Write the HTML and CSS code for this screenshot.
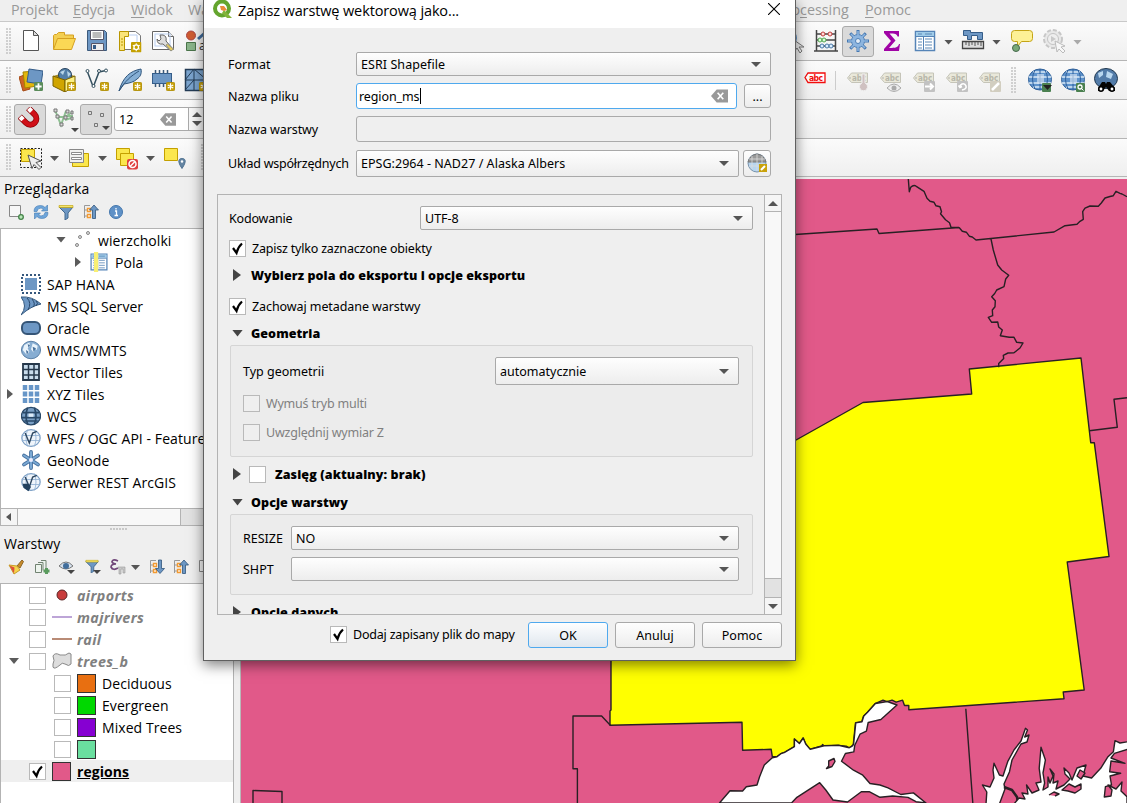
FILE: index.html
```html
<!DOCTYPE html>
<html lang="pl">
<head>
<meta charset="utf-8">
<title>Zapisz warstwę wektorową jako...</title>
<link rel="stylesheet" href="styles.css">
</head>
<body>
<svg class="sprite" aria-hidden="true">
<defs>
<symbol id="star" viewBox="0 0 10 10"><rect x=".5" y=".5" width="9" height="9" rx="1" fill="#c9a20c" stroke="#b08d00"/><path d="M5 1.5v7M2 3.2l6 3.6M8 3.2L2 6.8" stroke="#fff" stroke-width="1.3"/></symbol>
<symbol id="gearstar" viewBox="0 0 10 10"><rect width="10" height="10" rx="1" fill="#c4a000"/><circle cx="5" cy="5" r="2.2" fill="none" stroke="#fff" stroke-width="1.3"/><path d="M5 1.2v1.5M5 7.3v1.5M1.7 3l1.3.8M7 6.2l1.3.8M8.3 3L7 3.8M3 6.2L1.7 7" stroke="#fff"/></symbol>
<symbol id="plus" viewBox="0 0 10 10"><rect width="10" height="10" rx="1.5" fill="#5a8c5a"/><path d="M5 1.5v7M1.5 5h7" stroke="#fff" stroke-width="2"/></symbol>
<symbol id="new" viewBox="0 0 24 24"><path d="M4.5 1.5h10l5 5v15h-15z" fill="#fff" stroke="#555"/><path d="M14.500 1.500v5h5z" fill="#ddd" stroke="#555"/></symbol>
<symbol id="open" viewBox="0 0 24 24"><path d="M1.500 20V6.500l1-1h2l2-2h6v2.500h9v4" fill="#f3cf52" stroke="#d5a021"/><path d="M1.500 20.500l4-11h18l-4 11z" fill="#fbd855" stroke="#d5a021"/></symbol>
<symbol id="save" viewBox="0 0 24 24"><path d="M2.500 1.500h17l2 2v18h-19v-20z" fill="#6d97c4" stroke="#3c5a7c"/><path d="M5.500 1.500h13v9h-13z" fill="#fff" stroke="#556"/><path d="M7.500 4h9M7.500 6h9M7.500 8h9" stroke="#777"/><path d="M6.500 14.500h12v7h-12z" fill="#eee" stroke="#556"/><path d="M8 16h3v4h-3z" fill="#345b87"/></symbol>
<symbol id="layout" viewBox="0 0 24 24"><path d="M3.500 2.500h14l5 4v14h-19z" fill="#fff" stroke="#777"/><path d="M6 6h13v12" fill="none" stroke="#b8cdf0"/><path d="M1.500 2.500h9v5h-4v14h-5z" fill="#fae47a" stroke="#b99600"/><path d="M3 10h2M3 13h2M3 16h2" stroke="#b99600"/><use href="#gearstar" x="13" y="13" width="10.500" height="10.500"/></symbol>
<symbol id="wrench" viewBox="0 0 24 24"><path d="M1.500 2.500h16l5 5v13h-21z" fill="#fff" stroke="#666"/><path d="M17.500 2.500v5h5" fill="#eee" stroke="#666"/><rect x="4" y="5" width="15" height="12" fill="none" stroke="#b8cdf0"/><path d="M9 6l1 4-2 2-2-2q0 6 6 5l8 7 2-2-7-8q1-5-3-6z" fill="#ddd" stroke="#666"/><path d="M15 16l5 6 2.500-2-6-5z" fill="#e9cc58" stroke="#998"/></symbol>
<symbol id="style" viewBox="0 0 24 24"><circle cx="7" cy="6.500" r="4.500" fill="#cf5c31" stroke="#a44"/><path d="M2.500 13.500h9v8h-9z" fill="#8ab58a" stroke="#4a744a"/><path d="M14 10l9-8" stroke="#406c9c" stroke-width="3"/><text x="15" y="21" font-family="Noto Sans" font-size="12" fill="#333">a</text></symbol>
<symbol id="datasource" viewBox="0 0 24 24"><path d="M0 9l8-3 3 15-7 2z" fill="#cf6424" stroke="#a54b16"/><path d="M4 4l13-1 1 15-12 2z" fill="#e2b70c" stroke="#a88400"/><path d="M10 1l14 2-2 13-14-2z" fill="#6d97c4" stroke="#355d89"/><use href="#plus" x="15" y="14" width="9" height="9"/></symbol>
<symbol id="geopkg" viewBox="0 0 24 24"><path d="M1 8l11-3 11 3-10 4z" fill="#a58a20"/><circle cx="13" cy="7" r="6.500" fill="#527fa8" stroke="#29435e"/><path d="M8 4l5-2-2 5zM15 3l4 3-3 3z" fill="#b9d6e9"/><path d="M1 8l12 4v12L1 18z" fill="#d0a500" stroke="#7b6200"/><path d="M13 12l10-4v10l-10 6z" fill="#fbf084" stroke="#7b6200"/><use href="#star" x="15" y="14" width="9" height="9"/></symbol>
<symbol id="vec" viewBox="0 0 24 24"><path d="M2.500 4l5 13 1.500 0 5-13 7-1.500" fill="none" stroke="#34505f" stroke-width="1.500"/><g fill="#fff" stroke="#34505f"><circle cx="2.500" cy="3" r="1.500"/><circle cx="14" cy="3" r="1.500"/><circle cx="21" cy="2.500" r="1.500"/><circle cx="8.500" cy="18" r="1.500"/></g><use href="#star" x="15" y="14" width="9" height="9"/></symbol>
<symbol id="feather" viewBox="0 0 24 24"><path d="M1 23C5 9 12 3 23 1c1 5-1 8-4 10-3 3-7 4-13 5z" fill="#86afd5" stroke="#31567c"/><path d="M1 23C7 13 13 8 21 3" fill="none" stroke="#31567c"/><use href="#star" x="15" y="14" width="9" height="9"/></symbol>
<symbol id="chip" viewBox="0 0 24 24"><path d="M4.500 2v17M8.500 2v17M12.500 2v17M16.500 2v17" stroke="#3a5878" stroke-width="1.500"/><rect x="1.500" y="5.500" width="19" height="10" fill="#6d97c4" stroke="#355d89"/><use href="#star" x="15" y="14" width="9" height="9"/></symbol>
<symbol id="mesh" viewBox="0 0 24 24"><path d="M1.500 1.500h22v21h-22z" fill="#7ba4ce" stroke="#243c56" stroke-width="1.500"/><path d="M1 12h22M10 1v22M1 12L10 1l13 11M1 22l9-10" stroke="#243c56" fill="none"/><use href="#star" x="15" y="14" width="9" height="9"/></symbol>
<symbol id="magnet" viewBox="0 0 24 24"><g transform="rotate(-45 12 12)" fill="none"><path d="M6.500 3v9a6 6 0 0 0 12 0V3" stroke="#8d0005" stroke-width="6"/><path d="M6.500 4v8a6 6 0 0 0 12 0V4" stroke="#d01018" stroke-width="4.500"/><path d="M6.500 3.600v4M18.500 3.600v4" stroke="#fff" stroke-width="4.500"/></g></symbol>
<symbol id="vertexall" viewBox="0 0 24 24"><path d="M3 3l6 15L14 4M7 10h6l6-4M13 13l6-2M13 9h8" fill="none" stroke="#8fc193" stroke-width="2"/><path d="M2 2h3v3H2zM4 8h3v3H4zM8 16h3v3H8zM12 9h3v3h-3zM14 3h3v3h-3zM19 4h2v3h-2zM19 10h2v3h-2z" fill="#d9d9d9" stroke="#777"/></symbol>
<symbol id="vertexpts" viewBox="0 0 24 24"><path d="M4.500 4.500h3v3h-3zM16.500 6.500h3v3h-3zM10.500 16.500h3v3h-3z" fill="#ddd" stroke="#777"/></symbol>
<symbol id="select" viewBox="0 0 24 24"><path d="M1.500 2.500h21v19h-21z" fill="none" stroke="#222" stroke-dasharray="2 1.500"/><path d="M2.500 3.500h13v12h-13z" fill="#fbe74d" stroke="#c4a000"/><path d="M9 9l13 6-5 1.500 5 5-2 2-5-5-2 4z" fill="#eee" stroke="#555"/></symbol>
<symbol id="selform" viewBox="0 0 24 24"><path d="M5.500 7.500h16v13h-16z" fill="#fbe74d" stroke="#c4a000"/><path d="M2.500 3.500h14v13h-14z" fill="#f0f0ef" stroke="#888"/><path d="M4.500 6.500h10v2h-10zM4.500 11.500h10v2h-10z" fill="#fff" stroke="#8b8b8b"/></symbol>
<symbol id="deselect" viewBox="0 0 24 24"><path d="M1.500 2.500h13v11h-13z" fill="#fbe74d" stroke="#c4a000"/><path d="M5.500 7.500h13v12h-13z" fill="#fbe74d" stroke="#c4a000"/><rect x="12" y="13" width="11" height="10.500" rx="2" fill="#df3f3f"/><circle cx="17.500" cy="18" r="3.500" fill="none" stroke="#fff" stroke-width="1.500"/><path d="M15 20.500l5-5" stroke="#fff" stroke-width="1.500"/></symbol>
<symbol id="selloc" viewBox="0 0 24 24"><path d="M1.500 2.500h13v12h-13z" fill="#fbe74d" stroke="#c4a000"/><path d="M19 22.500c-6-9-2-10 0-10s6 1 0 10z" fill="#6686a3" stroke="#4e7191"/><circle cx="19" cy="15.500" r="1.200" fill="#fff"/></symbol>
<symbol id="identify" viewBox="0 0 24 24"><circle cx="8" cy="9" r="8" fill="#5d91c4"/><path d="M10 9l13 9-5 0 3 4-2 2-3-5-3 4z" fill="#eee" stroke="#777"/></symbol>
<symbol id="abacus" viewBox="0 0 24 24"><path d="M2.500 1v21M21.500 1v21M0 22h24M2 5h20M2 11h20M2 17h20" stroke="#454545" stroke-width="1.500"/><g fill="#ffd7d7" stroke="#c13d3d"><circle cx="9" cy="5" r="2"/><circle cx="16" cy="5" r="2"/></g><g fill="#d8ffd5" stroke="#54a554"><circle cx="6" cy="11" r="2"/><circle cx="10" cy="11" r="2"/></g><g fill="#d8edff" stroke="#4a79a6"><circle cx="8" cy="17" r="2"/><circle cx="13" cy="17" r="2"/><circle cx="17" cy="17" r="2"/></g></symbol>
<symbol id="gear" viewBox="0 0 24 24"><path d="M12 1v22M1 12h22M4.200 4.200l15.600 15.600M19.800 4.200L4.200 19.800" stroke="#4478b2" stroke-width="3"/><circle cx="12" cy="12" r="6.500" fill="#8db5df" stroke="#4d80b8"/><path d="M12 2v20M2 12h20M5 5l14 14M19 5L5 19" stroke="#8db5df" stroke-width="1.600"/><circle cx="12" cy="12" r="2.500" fill="#e4edf7" stroke="#4d80b8"/></symbol>
<symbol id="sigma" viewBox="0 0 24 24"><path d="M4 2h15v5.500h-1.500C17 5 15 4.500 9.500 4.500l6 7L9 19c7 0 9-.5 10-4h1l-1 7H4v-2l7-8-7-8z" fill="#a003a5"/></symbol>
<symbol id="table" viewBox="0 0 24 24"><path d="M2.500 2.500h19v19h-19z" fill="#fff" stroke="#5584b7" stroke-width="1.500"/><path d="M3 3h18v4H3z" fill="#9fcbe8"/><path d="M3 7.500h18M10.500 7v14" stroke="#5584b7"/><path d="M5 10h4M12 10h7M5 13h4M12 13h7M5 16h4M12 16h7M5 19h4M12 19h7M5 5h4M12 5h7" stroke="#5c89b7"/></symbol>
<symbol id="measure" viewBox="0 0 24 24"><path d="M2.500 1.500h7v2h12v7h-5v-4h-6v4h-4v-4h-4z" fill="#6d97c4" stroke="#355d89"/><path d="M1.500 12.500h21v7h-21z" fill="#ddd" stroke="#444" stroke-width="1.300"/><path d="M5 13v3M8 13v4M11 13v3M14 13v4M17 13v3M20 13v4" stroke="#555"/></symbol>
<symbol id="tip" viewBox="0 0 24 24"><path d="M5.500 1.500h15q3 0 3 3v5q0 3-3 3h-8l-4 5 0-5h-3q-3 0-3-3v-5q0-3 3-3z" fill="#fdf196" stroke="#c4a416"/><circle cx="7" cy="19" r="3.500" fill="#78a878" stroke="#45684b"/></symbol>
<symbol id="action" viewBox="0 0 24 24"><circle cx="11" cy="10" r="9" fill="#e8e8e8" stroke="#c7c7c7" stroke-width="2" stroke-dasharray="4 2"/><circle cx="11" cy="10" r="5.500" fill="#eee" stroke="#c4c4c4"/><path d="M9 7l5 3-5 3z" fill="#c9c9c9"/><path d="M13 12l10 5-4 1 4 4-2 2-4-4-2 3z" fill="#f7f7f7" stroke="#bbb"/></symbol>
<symbol id="label" viewBox="0 0 24 24"><path d="M2.500 10l4-5h16v9.500h-16z" fill="#e9e8da" stroke="#c5c4b8"/><circle cx="5" cy="10" r=".8" fill="#aaa"/><text x="7" y="12.500" font-family="DejaVu Sans Condensed" font-weight="bold" font-size="8" fill="#b7b6a9">abc</text></symbol>
<symbol id="globe" viewBox="0 0 24 24"><ellipse cx="12" cy="11.500" rx="11.500" ry="10.500" fill="#5f93cc" stroke="#2f5f98"/><path d="M5 4h14M1 9h22M1 15h22M5 19h14" stroke="#dcebf8" stroke-width="1.500"/><path d="M12 1v21M7 2q-5 9 0 19M17 2q5 9 0 19" fill="none" stroke="#2d5f9c"/><path d="M9 6h7v10H9z" fill="#d5e4f2" opacity=".65"/></symbol>
<symbol id="world" viewBox="0 0 24 24"><ellipse cx="12" cy="12" rx="11.500" ry="10.500" fill="#87add2" stroke="#49719a"/><path d="M4 6l6-3 1 4-3 3 2 4-3 4-5-6zM14 4l6 3-1 5-3-2-1 5-3-4z" fill="#e9f3fb"/><path d="M8 5l3 1-2 3zM14 8l4 2-3 4zM6 12l3 2-2 4z" fill="#48719c"/></symbol>
<symbol id="wfs" viewBox="0 0 24 24"><ellipse cx="12" cy="12" rx="11" ry="10" fill="#eff5fb" stroke="#799dc4" stroke-width="1.500"/><path d="M1 9h22M1 15h22M8 2q-4 10 0 20M16 2q4 10 0 20" fill="none" stroke="#91b1d2"/><path d="M5 6l5 12 4-12 5-2" fill="none" stroke="#2e4760" stroke-width="1.700"/></symbol>
<symbol id="wcs" viewBox="0 0 24 24"><ellipse cx="12" cy="12" rx="11.500" ry="10.500" fill="#799fc5" stroke="#294969" stroke-width="1.500"/><path d="M2 8h20M1 14h22M4 18h16M8 2q-4 10 0 20M16 2q4 10 0 20" fill="none" stroke="#294969" stroke-width="2"/><path d="M9 9h6v4H9z" fill="#dcebf8"/></symbol>
<symbol id="refresh" viewBox="0 0 16 16"><path d="M1 7.500Q1 1.500 7.500 1.500q3 0 4.500 2L14.500 1v6H8.500l2-2Q8 3.500 6 4.500 4.500 5.500 4 7.500zM15 8.500q0 6-6.500 6-3 0-4.500-2L1.500 15V9h6l-2 2q2.500 1.500 4.500.5 1.500-1 2-3z" fill="#6ea5da" stroke="#3f78b2" stroke-width=".6"/></symbol>
<symbol id="filter" viewBox="0 0 16 16"><path d="M1 3h14l-5 6v5l-3 2V9z" fill="#6d97c4" stroke="#41688f"/><path d="M1 1.500h14v2H1z" fill="#f5e46c" stroke="#bda000" stroke-width=".6"/></symbol>
<symbol id="collapse" viewBox="0 0 16 16"><path d="M7 1.500H1.500V14M1.500 6H5M1.500 12H5" fill="none" stroke="#999"/><path d="M4.500 4.500h3v3h-3zM4.500 10.500h3v3h-3z" fill="#fff" stroke="#f29a32" stroke-width="1.400"/><path d="M11 1l4.500 5h-3v8.500h-3V6h-3z" fill="#6d97c4" stroke="#31567c" stroke-width=".8"/></symbol>
<symbol id="expand" viewBox="0 0 16 16"><path d="M7 1.500H1.500V14M1.500 6H5M1.500 12H5" fill="none" stroke="#999"/><path d="M4.500 4.500h3v3h-3zM4.500 10.500h3v3h-3z" fill="#fff" stroke="#f29a32" stroke-width="1.400"/><path d="M11 14.500l-4.500-5h3V1h3v8.500h3z" fill="#6d97c4" stroke="#31567c" stroke-width=".8"/></symbol>
<symbol id="info" viewBox="0 0 16 16"><circle cx="8" cy="8" r="6.500" fill="#5f91c7" stroke="#4477ad"/><path d="M8 4v1.500M7 7h1.500v4.500M6.500 11.500h3.500" stroke="#fff" stroke-width="1.300" fill="none"/></symbol>
<symbol id="addsel" viewBox="0 0 16 16"><path d="M1.500 1.500h11v11h-11z" fill="#f7f7f7" stroke="#888"/><circle cx="13" cy="13" r="2.300" fill="#b7e6b7" stroke="#408145" stroke-width="1.300"/></symbol>
</defs>
</svg>

<div class="app">
  <nav class="menubar"><span class="m1">Projekt</span><span class="m2"><u>E</u>dycja</span><span class="m3"><u>W</u>idok</span><span class="m4">Wa</span><span class="m5">Pro<u>c</u>essing</span><span class="m6"><u>P</u>omoc</span></nav>

  <div class="toolbar">
    <i class="grip"></i>
    <span class="tool"><svg><use href="#new"/></svg></span><span class="tool"><svg><use href="#open"/></svg></span><span class="tool"><svg><use href="#save"/></svg></span><span class="tool"><svg><use href="#layout"/></svg></span><span class="tool"><svg><use href="#wrench"/></svg></span><span class="tool"><svg><use href="#style"/></svg></span>
    <div class="right r1">
      <span class="tool"><svg><use href="#identify"/></svg></span><span class="tool"><svg><use href="#abacus"/></svg></span><span class="tool on"><svg><use href="#gear"/></svg></span><span class="tool"><svg><use href="#sigma"/></svg></span><span class="tool"><svg><use href="#table"/></svg></span><i class="drop"></i><span class="tool"><svg><use href="#measure"/></svg></span><i class="drop"></i><span class="tool"><svg><use href="#tip"/></svg></span><span class="tool"><svg><use href="#action"/></svg></span><i class="drop dim"></i>
    </div>
  </div>

  <div class="toolbar">
    <i class="grip"></i>
    <span class="tool"><svg><use href="#datasource"/></svg></span><span class="tool"><svg><use href="#geopkg"/></svg></span><span class="tool"><svg><use href="#vec"/></svg></span><span class="tool"><svg><use href="#feather"/></svg></span><span class="tool"><svg><use href="#chip"/></svg></span><span class="tool"><svg><use href="#mesh"/></svg></span>
    <div class="right r2">
      <span class="tool"><svg viewBox="0 0 24 24"><path d="M2 9.500l3-4.500h17v9.500H5z" fill="#fff" stroke="#f20d0d" stroke-width="1.300"/><text x="6" y="12.500" font-family="DejaVu Sans Condensed" font-weight="bold" font-size="8.500" textLength="14" fill="#f20d0d">abc</text></svg></span><i class="vsep"></i>
      <span class="tool"><svg viewBox="0 0 24 24"><use href="#label"/><path d="M17 6v9a4 4 0 1 0 3 0V6z" fill="#cfc1c1" stroke="#eee"/></svg></span>
      <span class="tool"><svg viewBox="0 0 24 24"><use href="#label"/><path d="M9 20q7-8 14 0-7 7-14 0z" fill="#eee" stroke="#aaa"/><circle cx="16" cy="20" r="2.500" fill="#aaa"/></svg></span>
      <span class="tool"><svg viewBox="0 0 24 24"><use href="#label"/><rect x="13" y="13" width="11" height="11" rx="1" fill="#c2c2c2"/><path d="M14 18.500h8M19 15.500l3 3-3 3" stroke="#fff" stroke-width="2" fill="none"/></svg></span>
      <span class="tool"><svg viewBox="0 0 24 24"><use href="#label"/><rect x="13" y="13" width="11" height="11" rx="1" fill="#c2c2c2"/><path d="M18 22q5-1 4-4-1-3-4-2-2 1-2 3M14.500 17.500l1.500 2 2-1" stroke="#fff" stroke-width="1.600" fill="none"/></svg></span>
      <span class="tool"><svg viewBox="0 0 24 24"><use href="#label"/><rect x="13" y="13" width="11" height="11" rx="1" fill="#d2cec0"/><path d="M15 22l7-7" stroke="#fff" stroke-width="2.500"/></svg></span>
      <i class="grip mid"></i>
      <span class="tool"><svg viewBox="0 0 24 24"><use href="#globe"/><rect x="14" y="15" width="9" height="9" rx="1" fill="#4a8050"/><path d="M15 17h9l-4.500 5z" fill="#222"/></svg></span>
      <span class="tool"><svg viewBox="0 0 24 24"><use href="#globe"/><rect x="15" y="15" width="9" height="9" rx="1" fill="#4a8050"/><circle cx="19" cy="19" r="2" fill="none" stroke="#fff" stroke-width="1.300"/><path d="M20.500 20.500l2 2" stroke="#fff"/></svg></span>
      <span class="tool"><svg viewBox="0 0 24 24"><ellipse cx="12" cy="10.500" rx="11.500" ry="10" fill="#527ba8" stroke="#20384f"/><path d="M4 5l5-2v4l-4 3zM13 3l6 3-2 5-5-2z" fill="#b9d7ef"/><path d="M8 14h3l1 2 1-2h3l5 6v3h-6l-3-4-3 4H4v-3z" fill="#050505"/><circle cx="7" cy="21" r="2.200" fill="#fff" stroke="#000" stroke-width="1.500"/><circle cx="18" cy="21" r="2.200" fill="#fff" stroke="#000" stroke-width="1.500"/></svg></span>
    </div>
  </div>

  <div class="toolbar">
    <i class="grip"></i>
    <span class="tool on"><svg><use href="#magnet"/></svg></span>
    <span class="tool narrow"><svg><use href="#vertexall"/></svg><i class="sub"></i></span>
    <span class="tool on"><svg><use href="#vertexpts"/></svg><i class="sub"></i></span>
    <div class="spin"><span>12</span><svg class="clear" viewBox="0 0 18 14"><path d="M0 7l6-7h12v14H6z" fill="#999"/><path d="M7 3.500l6 7M13 3.500l-6 7" stroke="#fff" stroke-width="1.700"/></svg><div class="steps"><i class="up"></i><i class="dn"></i></div></div>
  </div>

  <div class="toolbar last">
    <i class="grip"></i>
    <span class="tool"><svg><use href="#select"/></svg></span><i class="drop"></i><span class="tool"><svg><use href="#selform"/></svg></span><i class="drop"></i><span class="tool"><svg><use href="#deselect"/></svg></span><i class="drop"></i><span class="tool"><svg><use href="#selloc"/></svg></span><i class="grip end"></i>
  </div>

  <main class="work">
    <aside class="docks">
      <h2 class="docktitle">Przeglądarka</h2>
      <div class="dockbar b1"><svg><use href="#addsel"/></svg><svg><use href="#refresh"/></svg><svg><use href="#filter"/></svg><svg><use href="#collapse"/></svg><svg><use href="#info"/></svg></div>
      <div class="tree browser">
        <div class="row n1"><i class="tri down"></i><svg viewBox="0 0 20 20"><g fill="#ddd" stroke="#888"><circle cx="14" cy="3" r="1.500"/><circle cx="6" cy="7" r="1.500"/><circle cx="3" cy="15" r="1.500"/></g></svg><span>wierzcholki</span></div>
        <div class="row n2"><i class="tri side"></i><svg viewBox="0 0 24 24"><use href="#table"/><path d="M6 0h5v24H6z" fill="#f8ef73"/></svg><span>Pola</span></div>
        <div class="row"><svg viewBox="0 0 20 20"><path d="M1 1h18v18H1z" fill="none" stroke="#36587e" stroke-width="2" stroke-dasharray="2 2"/><path d="M4 4h12v12H4z" fill="#6d97c4"/></svg><span>SAP HANA</span></div>
        <div class="row"><svg viewBox="0 0 20 20"><path d="M0 1q11-1 20 7-10 2-20 11 7-9 0-18z" fill="#6d97c4" stroke="#34597f"/><path d="M6 2q5 5 1 12M11 3q4 5 1 8M15 5q3 2 0 5" fill="none" stroke="#28486b"/></svg><span>MS SQL Server</span></div>
        <div class="row"><svg viewBox="0 0 20 20"><rect x="1" y="4" width="18" height="12" rx="5" fill="#6d97c4" stroke="#355577" stroke-width="2"/></svg><span>Oracle</span></div>
        <div class="row"><svg><use href="#world"/></svg><span>WMS/WMTS</span></div>
        <div class="row"><svg viewBox="0 0 20 20"><path d="M2 2h16v16H2z" fill="#c9dcec" stroke="#26384b" stroke-width="1.800"/><path d="M7.500 2v16M13 2v16M2 7.500h16M2 13h16" stroke="#26384b" stroke-width="1.500"/></svg><span>Vector Tiles</span></div>
        <div class="row exp"><i class="tri side"></i><svg viewBox="0 0 20 20"><path d="M4 1v18M10 1v18M16 1v18" stroke="#6796c8" stroke-width="4.500" stroke-dasharray="5 1.500"/></svg><span>XYZ Tiles</span></div>
        <div class="row"><svg><use href="#wcs"/></svg><span>WCS</span></div>
        <div class="row"><svg><use href="#wfs"/></svg><span>WFS / OGC API - Features</span></div>
        <div class="row"><svg viewBox="0 0 20 20"><path d="M10 2v16M3 5.500l14 9M17 5.500l-14 9" stroke="#456f9d" stroke-width="3.800" stroke-linecap="round"/><path d="M10 2v16M3 5.500l14 9M17 5.500l-14 9" stroke="#7ba9d4" stroke-width="2" stroke-linecap="round"/><circle cx="10" cy="10" r="2" fill="#eef"/></svg><span>GeoNode</span></div>
        <div class="row"><svg viewBox="0 0 24 24"><use href="#wfs"/><path d="M2 14h7l3 4-3 5-6-4z" fill="#23415e"/></svg><span>Serwer REST ArcGIS</span></div>
      </div>
      <div class="hscroll"><i class="arrow"></i><i class="thumb"></i></div>
      <div class="handle"></div>
      <h2 class="docktitle t2">Warstwy</h2>
      <div class="dockbar b2">
        <svg viewBox="0 0 16 16"><path d="M9 7l5-6 1.500 1.500L12 9z" fill="#c98c2a" stroke="#8c6525"/><path d="M1 6l8 1 3 4-6 4z" fill="#f5d54d" stroke="#c99d26"/><path d="M1.500 6.500l5 2-.5 6z" fill="#dd4d3b"/></svg>
        <svg viewBox="0 0 16 16"><path d="M1.500 5.500h6v8h-6zM4 3.500h5v8M7 1.500h5v8" fill="#edf4ed" stroke="#718271"/><path d="M12.500 9v6M9.500 12h6" stroke="#5a9b5e" stroke-width="3"/></svg>
        <svg viewBox="0 0 16 16"><path d="M0 7q7-8 14 0-7 6-14 0z" fill="#d4e0ed" stroke="#777"/><circle cx="7" cy="7" r="3" fill="#416d9b"/><path d="M8 11h8l-4 4z" fill="#444"/></svg>
        <svg viewBox="0 0 16 16"><use href="#filter" width="14" height="14"/><path d="M8 11h8l-4 4z" fill="#444"/></svg>
        <svg viewBox="0 0 16 16"><path d="M8 2Q3-.5 2 2.500q0 2 4 2.500Q1 5 1 8q2 4 7 1" fill="none" stroke="#714779" stroke-width="1.700"/><path d="M8 8h7v6h-2v-4h-2v5H9v-5z" fill="#c9c9c9" stroke="#999" stroke-width=".6"/></svg>
        <i class="drop"></i><svg><use href="#expand"/></svg><svg><use href="#collapse"/></svg><svg><use href="#addsel"/></svg>
      </div>
      <div class="tree layers">
        <div class="row grp"><i class="cb"></i><svg viewBox="0 0 20 20"><circle cx="10" cy="10" r="5" fill="#c83c3c" stroke="#5a2525"/></svg><em>airports</em></div>
        <div class="row grp"><i class="cb"></i><svg viewBox="0 0 20 20"><path d="M0 10h20" stroke="#bda5d7" stroke-width="2"/></svg><em>majrivers</em></div>
        <div class="row grp"><i class="cb"></i><svg viewBox="0 0 20 20"><path d="M0 10h20" stroke="#b98b76" stroke-width="2"/></svg><em>rail</em></div>
        <div class="row grp exp2"><i class="tri down"></i><i class="cb"></i><svg viewBox="0 0 20 20"><path d="M1 5q2-4 7-1 6 1 9-2 3 0 2 4v7q-2 3-6 0-3-2-5 1-6 5-7 2v-3q2-3 0-8z" fill="#ddd" stroke="#888"/></svg><em>trees_b</em></div>
        <div class="row leaf"><i class="cb"></i><b class="sw orange"></b><span>Deciduous</span></div>
        <div class="row leaf"><i class="cb"></i><b class="sw green"></b><span>Evergreen</span></div>
        <div class="row leaf"><i class="cb"></i><b class="sw purple"></b><span>Mixed Trees</span></div>
        <div class="row leaf"><i class="cb"></i><b class="sw mint"></b></div>
        <div class="row grp current"><i class="cb"><svg viewBox="0 0 15 15"><path d="M3 7l3.500 5Q8 6 12 2.500" fill="none" stroke="#000" stroke-width="2.200"/></svg></i><b class="sw pink"></b><strong>regions</strong></div>
      </div>
    </aside>
    <svg class="map" viewBox="241 179 886 624">
      <path d="M241 179h886v624H241z" fill="#e15989"/>
      <g stroke="#282024" stroke-width="1.400" fill="none" stroke-linejoin="round">
        <path d="M611 640V710l-1 1v14.300l132-3 .6 28 28.600-1 1.100 7.400h4.700q4-4 8-4.500l9.400-5.500V739l5 4.500 3.800-5.500 2.500 6 4 5.300 12-3.300 1-1.500 1 1.500 14.500-.5 8 .7 2.800 1.700q4.500-2 4.400-4.400l2.100-20.600 6.200-1 1.800-5.700 4-4 7.600-8.500 7.900-3.500 4 1.500 5.100-1.500 4 2 6.500-2 1.900 5.300h4.300v4.300L1064 698.700l-.8-6.700 21-2-17-128 41.800-5.500L1094.300 442.700h-3.600L1081 358l-111.700 11 2.400 25-108.700 8.500L780 449V640z" fill="#ff0"/>
        <path d="M719.500 803l10.500-12.300 12.600.3 3.700-4.300 10.700-1.700 2.600-8.300 4.700-11.700 8-7.300 4.700-1q4-4 8-4.500l9.400-5.500V739l5 4.500 3.800-5.500 2.500 6 4.500 5.300 13.800-3.600 14.500-.4 10.800 2.400q4.500-2 4.400-4.400l2.100-20.600 6.200-1 1.800-5.700 4-4 7.600-8.500 11.900-2 9.700 3.500-16.100 14.500-12.700 3-1.800 8.700-6.400 3-5.200 11-1 6.700-8.400 1.600-3.900 7.700 12 9 9.300 5 7.200 8.300 10 1.500 8 2.900 12.800 6.600 12.600-1.600L926 803l-10-1.300-8-4.300-15.300-1.400-12.700 1.300-10.800-5.600h-7.900L847.500 802l-14.500-2-7.200-10-6.100-7.300-22.800 14.600-5.400 5.700z" fill="#fff"/>
        <path d="M834 758.500l-5.300 2.500v5l-2.200 2.500 5.500-2 3-5z" fill="#e15989"/>
        <path d="M986 804L986.800 792 982.400 785 990 787 994 778 993 770 994 763.300 999.400 775 1003 776 1007.700 761.700 1014 750 1021 741 1025.500 728.300 1027.500 730 1024.700 737 1029 735 1027 742 1021 744 1012 760 1009.500 771.700 1004 784 1005 789 999.400 804z" fill="#fff"/>
        <path d="M1004 787l8 3 5 7 1 7" stroke-width="2.500"/>
        <path d="M1014 804L1019 798 1025 799 1022 793 1028 794 1026.500 785 1032 793 1039 790 1036 783 1041 782 1039.200 768.300 1041 747.300 1045.400 760 1043 773 1044.600 783 1043 790 1048 787 1048 777 1050 783 1053 776 1050 769 1054 774 1053 783 1058 781 1056 789 1064 785 1070 779 1065 774 1064 768 1069 773 1072 780 1077 768 1086 765 1083 776 1091.600 778 1100.700 768.300 1108 756.700 1113.400 751.700 1115 740.700 1120 743 1128 741.700V749.300L1114.400 753.300 1111 758 1125 763.300 1111 761 1109.700 771.700 1120.600 773.300 1110 776 1111.500 785 1105.400 786.700 1104.300 797 1111 796 1112 790 1108 785 1116 789 1122 782 1121 791 1127 796.700V804z" fill="#fff"/>
        <path d="M1062 790l7-6 6 3 6-3v5l-6 4-7-2zM1077 776l3-6 5 3-4 6zM1049 795l5-3 5 2-4 2" fill="#e15989"/>
        <path d="M908.300 179l1 12.700 1.400-4.400q3-3 5.600-1l7.700 5 3 7 3 3 4 1 2 3.500 4 1 1.500 5-1 2 5 6 4 3 1.500 4.500 8.300.4 3 3.500 4 1 3 4 3 .8L976 240l78-8 11-6.300 12-1.400 3-3 3.300-2-.6-7.600 2.300-3.500 5-2.200 8.300.3 3-3.300 3.700-5 5-1.500 3.300-.8 2.700-4.400 4 2 2 .7 5 2.700M795 234.500l82-5.500 2 4.500 80-6M991 239l2.300 11 4.400 15 4 5 7 5.300-3 3.700-1.700 7.700-7.300 3.300-2 3.500-3 3.200 3.600 4-.3 6-2.700 3.300.4 5.700-4.400 1.600 3.400 5 6-.3 1 5 3.600 3-2 5.700 9 1.600 4.700 0 2.700 5 6.300.7-3 5-6 4.700-6 .3-4.700 2.300.4 3.300-5 5 0 3.600M1089.300 430.700l28-3.400-3.300-28 13-1.600M610.300 725.300l-8.700-9.300H573v52.700h4.400V803M965.800 708.700l7 94.300M253 803v-12.500l29 1V803"/>
      </g>
    </svg>
  </main>

  <section class="dialog">
    <header class="titlebar"><svg class="logo" viewBox="0 0 20 20"><circle cx="9" cy="8.500" r="7" fill="none" stroke="#64a52e" stroke-width="4"/><path d="M11 10l8 8h-5l-5-5z" fill="#82b43a"/><path d="M7 6h4l3 4-3 1-3-1z" fill="#e98b3a"/></svg><h1>Zapisz warstwę wektorową jako...</h1><svg class="close" viewBox="0 0 12 12"><path d="M0 0l12 12M12 0L0 12" stroke="#000" stroke-width="1.100"/></svg></header>
    <div class="form">
      <label class="l1">Format</label><div class="combo full"><span class="t-esri">ESRI Shapefile</span></div>
      <label class="l2">Nazwa pliku</label><div class="filebox"><div class="input focus"><span class="t-reg">region_ms</span><i class="caret"></i><svg class="clear" viewBox="0 0 18 14"><path d="M0 7l6-7h12v14H6z" fill="#999"/><path d="M7 3.500l6 7M13 3.500l-6 7" stroke="#fff" stroke-width="1.700"/></svg></div><button class="dots">...</button></div>
      <label class="l3">Nazwa warstwy</label><div class="input off"></div>
      <label class="l4">Układ współrzędnych</label><div class="crs"><div class="combo"><span class="t-epsg">EPSG:2964 - NAD27 / Alaska Albers</span></div><button class="crsbtn"><svg viewBox="0 0 20 20"><ellipse cx="10" cy="10" rx="9" ry="9" fill="#b7d5ef" stroke="#7893ac"/><path d="M1 9q2-7 9-8 7 1 9 8z" fill="#999" stroke="#777"/><path d="M5 3v13M10 1v17M15 3v12M2 6h16M2 13h16" stroke="#ddd" stroke-width=".8"/><path d="M12 11h8v8h-8z" fill="#c9a20c"/><path d="M14 17l4-4" stroke="#fff" stroke-width="2"/></svg></button></div>
    </div>

    <div class="scroll">
      <div class="content">
        <div class="line enc"><span class="w-kod">Kodowanie</span><div class="combo"><span class="t-utf">UTF-8</span></div></div>
        <div class="line c1"><i class="cb"><svg viewBox="0 0 15 15"><path d="M3 7l3.500 5Q8 6 12 2.500" fill="none" stroke="#000" stroke-width="2.200"/></svg></i><span class="w-zap">Zapisz tylko zaznaczone obiekty</span></div>
        <div class="line hd h1"><i class="tri side"></i><strong class="w-wyb">Wybierz pola do eksportu i opcje eksportu</strong></div>
        <div class="line c2"><i class="cb"><svg viewBox="0 0 15 15"><path d="M3 7l3.500 5Q8 6 12 2.500" fill="none" stroke="#000" stroke-width="2.200"/></svg></i><span class="w-zach">Zachowaj metadane warstwy</span></div>
        <div class="line hd h2"><i class="tri down"></i><strong class="w-geo">Geometria</strong></div>
        <div class="box geom">
          <div class="line g1"><span class="w-typ">Typ geometrii</span><div class="combo"><span class="t-auto">automatycznie</span></div></div>
          <div class="line g2"><i class="cb"></i><span class="w-wym">Wymuś tryb multi</span></div>
          <div class="line g3"><i class="cb"></i><span class="w-uwz">Uwzględnij wymiar Z</span></div>
        </div>
        <div class="line hd h3"><i class="tri side"></i><i class="cb"></i><strong class="w-zas">Zasięg (aktualny: brak)</strong></div>
        <div class="line hd h4"><i class="tri down"></i><strong class="w-opw">Opcje warstwy</strong></div>
        <div class="box opts">
          <div class="line"><span class="w-res">RESIZE</span><div class="combo"><span>NO</span></div></div>
          <div class="line"><span class="w-shp">SHPT</span><div class="combo"></div></div>
        </div>
        <div class="line hd h5"><i class="tri side"></i><strong class="w-opd">Opcje danych</strong></div>
      </div>
      <div class="vscroll"><i class="btn"><i class="up"></i></i><i class="thumb"></i><i class="btn bot"><i class="dn"></i></i></div>
    </div>

    <footer class="buttons"><i class="cb"><svg viewBox="0 0 15 15"><path d="M3 7l3.500 5Q8 6 12 2.500" fill="none" stroke="#000" stroke-width="2.200"/></svg></i><span class="w-dod">Dodaj zapisany plik do mapy</span><button class="ok">OK</button><button>Anuluj</button><button>Pomoc</button></footer>
  </section>
</div>
</body>
</html>
```
FILE: styles.css
```css
* { box-sizing: border-box; }
body { margin: 0; font-family: "Open Sans", "Noto Sans", sans-serif; color: #000; }
i, em { font-style: normal; }
.sprite { position: absolute; width: 0; height: 0; }
.app { position: relative; width: 1127px; height: 803px; overflow: hidden; background: #efefef; display: flex; flex-direction: column; }

/* menu bar */
.menubar { height: 22px; flex: none; display: flex; align-items: center; border-bottom: 1px solid #c9c9c9; font-size: 14.300px; line-height: 19px; color: #999; padding: 0 0 2px 11px; white-space: nowrap; }
.menubar u { text-underline-offset: 2px; }
.menubar span { flex: none; }
.m1 { width: 62px; }
.m2 { width: 58px; }
.m3 { width: 57px; }
.m4 { width: 589px; }
.m5 { width: 88px; }

/* toolbars */
.toolbar { height: 39px; flex: none; display: flex; align-items: center; background: linear-gradient(#fbfbfb, #efefef); border-bottom: 1px solid #b5b5b5; }
.toolbar.last { height: 38px; }
.grip { flex: none; width: 5px; height: 27px; margin: 0 3px 0 6px; background: radial-gradient(circle at 1px 1px, #c2c2c2 0.6px, transparent 1px) 0 0 / 3px 3px; }
.grip.mid { margin: 0 7px 0 6px; }
.grip.end { margin: 0 0 0 10px; }
.tool { flex: none; width: 33px; height: 33px; display: flex; align-items: center; justify-content: center; position: relative; }
.tool svg { width: 24px; height: 24px; }
.tool.on { height: 31px; width: 32px; border: 1px solid #aaa; border-radius: 3px; background: #dadada; margin-right: 1px; }
.sub { position: absolute; right: 1px; bottom: 4px; border: 4.500px solid transparent; border-top-color: #444; border-bottom: 0; }
.drop { flex: none; width: 9px; height: 5px; margin: 2px 3px 0; background: #555; clip-path: polygon(0 0, 100% 0, 50% 100%); }
.drop.dim { background: #aaa; }
.right { display: flex; align-items: center; margin-left: 564px; }
.r2 { margin-left: 586px; }
.vsep { width: 1px; height: 19px; background: #ccc; margin: 0 4px; }
.spin { margin-left: 1px; width: 92px; height: 24px; border: 1px solid #aaa; border-radius: 3px; background: #fff; display: flex; align-items: center; font: 12.500px "Noto Sans", sans-serif; padding-left: 4px; flex: none; }
.spin .clear { width: 16px; height: 13px; margin: 0 12px 0 27px; }
.steps { width: 16px; height: 22px; border-left: 1px solid #aaa; background: #f7f7f7; display: flex; flex-direction: column; align-items: center; justify-content: space-evenly; }
.up { border: 5px solid transparent; border-bottom: 5px solid #555; border-top: 0; }
.dn { border: 5px solid transparent; border-top: 5px solid #555; border-bottom: 0; }

/* docks */
.work { display: flex; flex: 1; margin-top: 2px; min-height: 0; }
.docks { width: 241px; flex: none; display: flex; flex-direction: column; border-right: 1px solid #b9b9b9; }
.map { width: 886px; height: 624px; flex: none; }
.docktitle { margin: 0; padding-left: 4px; height: 21px; font-size: 14px; line-height: 20px; font-weight: 400; flex: none; letter-spacing: .05px; }
.dockbar { display: flex; align-items: center; flex: none; }
.dockbar svg { width: 16px; height: 16px; flex: none; }
.b1 { height: 28px; padding: 0 0 5px 8px; gap: 9px; }
.b2 { height: 29px; padding: 0 0 4px 8px; gap: 9.500px; overflow: hidden; width: 205px; }
.b2 .drop { margin: 2px -1px 0 -4.500px; }
.b2 .drop ~ svg + svg { margin-left: -1px; }
.tree { background: #fff; border: 1px solid #b3b3b3; font-size: 14px; letter-spacing: .07px; width: 234px; overflow: hidden; }
.browser { height: 280px; flex: none; border-bottom: 0; }
.row { height: 22px; display: flex; align-items: center; padding-left: 20px; white-space: nowrap; }
.row svg { width: 20px; height: 20px; margin-right: 6px; flex: none; }
.tri { flex: none; background: #444; }
.tri.down { width: 10px; height: 6px; clip-path: polygon(0 0, 100% 0, 50% 100%); }
.tri.side { width: 6px; height: 10px; clip-path: polygon(0 0, 100% 50%, 0 100%); }
.row .tri { background: #5b5b5b; }
.n1 { padding-left: 55px; }
.n1 svg { margin: 0 4px 0 8px; }
.n1 .tri { margin-bottom: 1px; }
.n2 { padding-left: 74px; }
.n2 svg { margin: 0 6px 0 8px; }
.exp { padding-left: 6px; }
.exp .tri { margin-right: 8px; }
.hscroll { height: 18px; flex: none; width: 234px; border: 1px solid #b3b3b3; background: #e2e2e2; display: flex; align-items: center; }
.hscroll .arrow { width: 16px; height: 16px; background: #f5f5f5; display: flex; align-items: center; }
.hscroll .arrow::before { content: ""; margin-left: 5px; border: 4.500px solid transparent; border-right: 5px solid #555; border-left: 0; }
.hscroll .thumb { width: 164px; height: 16px; border: solid #b3b3b3; border-width: 0 1px; background: #f8f8f8; }
.handle { height: 8px; flex: none; margin-left: 110px; width: 17px; background: radial-gradient(circle at 1px 1px, #bbb 0.6px, transparent 1px) 0 2px / 3px 3px repeat-x; }
.t2 { height: 20px; }
.layers { flex: 1; border-bottom: 0; }
.cb { width: 17px; height: 17px; border: 1px solid #b9b9b9; background: #fff; flex: none; display: flex; align-items: center; justify-content: center; }
.row .cb svg, .cb svg { width: 15px; height: 15px; margin: 0; }
.grp { padding-left: 28px; }
.grp > svg { margin: 0 5px 0 6px; }
.exp2 { padding-left: 8px; }
.exp2 .tri { margin-right: 10px; }
.row em { color: #808080; font-weight: 700; font-style: italic; font-size: 14.300px; letter-spacing: .35px; }
.leaf { padding-left: 53px; }
.sw { width: 19px; height: 19px; border: 1px solid #333; margin: 0 6px; flex: none; }
.orange { background: #e86f11; }
.green { background: #00d800; }
.purple { background: #8600d2; }
.mint { background: #6adf9f; }
.pink { background: #e15989; }
.current { background: #efefef; }
.current strong { text-decoration: underline; font-size: 14px; }

/* dialog */
.dialog { position: absolute; left: 203px; top: -1px; width: 593px; height: 662px; border: 1px solid #606060; background: #efefef; box-shadow: 0 4px 13px rgba(0, 0, 0, .5); font-family: "Noto Sans", sans-serif; font-size: 12.500px; display: flex; flex-direction: column; white-space: nowrap; }
.titlebar { height: 28px; flex: none; background: #fff; display: flex; align-items: center; padding: 0 15px 8px 9px; }
.titlebar h1 { flex: 1; margin: 0 0 0 5px; font: 400 14.500px "Open Sans", sans-serif; letter-spacing: -.12px; }
.logo { width: 20px; height: 20px; }
.close { width: 12px; height: 12px; position: relative; top: -1px; }
.form { display: grid; grid-template-columns: 128px 415px; grid-template-rows: 24px 27px 26px 28px; row-gap: 6.500px; padding: 24px 0 0 24px; align-items: center; height: 166px; flex: none; }
.l3 { letter-spacing: -.08px; }
.l4 { letter-spacing: -.22px; padding-top: 1px; }
.combo { height: 24px; border: 1px solid #a9a9a9; border-radius: 2px; background: linear-gradient(#fefefe, #ededed); display: flex; align-items: center; justify-content: space-between; padding: 0 9px 0 4px; flex: 1; }
.combo::after { content: ""; margin-left: auto; border: 5px solid transparent; border-top: 5px solid #555; border-bottom: 0; }
.filebox, .crs { display: flex; align-items: center; }
.filebox { gap: 7px; }
.crs { gap: 4px; padding-top: 1px; }
.crs .combo, .crsbtn { height: 27px; }
.t-esri { letter-spacing: .07px; }
.t-epsg { letter-spacing: .03px; }
.t-reg { letter-spacing: -.1px; }
.input { height: 26px; border: 1px solid #aaa; border-radius: 3px; display: flex; align-items: center; padding: 0 8px 0 2px; }
.focus { width: 381px; border-color: #4fa9ee; background: #fff; }
.focus .clear { width: 17px; height: 14px; margin-left: auto; }
.caret { width: 1px; height: 16px; background: #000; }
button { font: inherit; color: #000; border: 1px solid #a9a9a9; border-radius: 3px; background: linear-gradient(#fefefe, #ededed); padding: 0; }
.dots { width: 27px; height: 24px; }
.crsbtn { width: 28px; display: flex; align-items: center; justify-content: center; }
.crsbtn svg { width: 20px; height: 20px; }

.scroll { height: 421px; width: 565px; margin-left: 13px; border: 1px solid #b3b3b3; display: flex; flex: none; overflow: hidden; }
.content { width: 546px; flex: none; padding: 11px 11px 0 11px; overflow: hidden; }
.line { display: flex; align-items: center; }
.enc { height: 24px; padding-right: 0; }
.enc > span { width: 191px; letter-spacing: -.2px; }
.c1 { height: 17px; margin-top: 10px; }
.line .cb + span { margin-left: 6px; }
.w-zap { letter-spacing: -.2px; }
.w-zach { letter-spacing: -.08px; }
.w-wym, .w-uwz { letter-spacing: -.2px; }
.hd { font-family: "Open Sans", sans-serif; font-weight: 700; height: 18px; letter-spacing: .07px; }
.hd .tri.side { width: 8px; height: 12px; margin: 0 10px 0 4px; }
.hd .tri.down { width: 11px; height: 7px; margin: 0 8px 0 3px; }
.h1 { margin-top: 9px; }
.c2 { height: 17px; margin-top: 14px; }
.h2 { margin-top: 9px; }
.box { border: 1px solid #d5d5d5; border-radius: 2px; background: #ececec; margin-left: 1px; }
.geom { height: 112px; margin-top: 3px; padding: 11px 13px 0 12px; }
.g1 > span { width: 252px; }
.g1 .combo { height: 28px; }
.g2 { margin-top: 10px; color: #808080; }
.g3 { margin-top: 12px; color: #808080; }
.g2 .cb, .g3 .cb { background: #efefef; }
.h3 { margin-top: 8px; }
.h3 .tri.side { margin-right: 8px; }
.h3 strong { margin-left: 9px; letter-spacing: .1px; }
.h4 { margin-top: 10px; }
.opts { height: 81px; margin-top: 3px; padding: 11px 13px 0 12px; display: flex; flex-direction: column; gap: 7px; }
.opts .line > span { width: 48px; }
.h5 { margin-top: 8px; }
.vscroll { width: 17px; flex: none; height: 419px; border-left: 1px solid #b3b3b3; background: #e2e2e2; display: flex; flex-direction: column; }
.btn { height: 16px; display: flex; align-items: center; justify-content: center; background: #f5f5f5; }
.vscroll .thumb { height: 368px; border: solid #b3b3b3; border-width: 1px 0; background: #f8f8f8; }
.bot { margin-top: auto; height: 17px; border-top: 1px solid #b3b3b3; }
.buttons { display: flex; align-items: center; padding: 7px 13px 0 126px; }
.buttons span { width: 169px; margin-left: 6px; letter-spacing: -.2px; }
.buttons .cb { margin-bottom: 2px; }
.buttons .cb + span { margin-bottom: 1px; }
.buttons button { width: 80px; height: 26px; margin-left: 7px; flex: none; }
.buttons .ok { border-color: #4fa9ee; background: linear-gradient(#fdfeff, #e0e7ee); }
```
